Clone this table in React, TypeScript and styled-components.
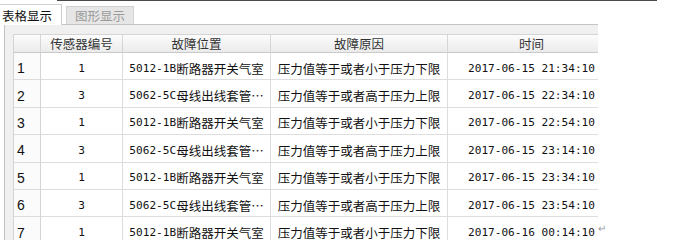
import React from 'react';
import styled, { createGlobalStyle } from 'styled-components';

const GlobalStyle = createGlobalStyle`
    body {
        margin: 0;
        background: #fff;
        font-family: "Noto Sans CJK SC", "Liberation Sans", sans-serif;
    }
`;

const Page = styled.div`
    width: 683px;
    height: 245px;
    overflow: hidden;
`;

const TopRule = styled.div`
    margin-left: 57px;
    width: 600px;
    height: 1px;
    background: #4a4a4a;
`;

const Body = styled.div`
    display: flex;
    align-items: flex-end;
`;

const Widget = styled.div`
    width: 598px;
    height: 239px;
    overflow: hidden;
`;

const TabBar = styled.div`
    display: flex;
    align-items: flex-end;
    height: 22px;
    margin-top: 1px;
    gap: 4px;
`;

const Tab = styled.div<{ $active?: boolean }>`
    height: ${p => (p.$active ? '21px' : '18px')};
    padding: 0 ${p => (p.$active ? '9px 0 2px' : '8px')};
    display: flex;
    align-items: center;
    font-size: 12.5px;
    color: ${p => (p.$active ? '#111' : '#9a9a9a')};
    background: ${p => (p.$active ? '#fff' : '#e6e6e6')};
    border: 1px solid ${p => (p.$active ? '#cfcfcf' : '#d2d2d2')};
    border-left: ${p => (p.$active ? 'none' : '1px solid #d2d2d2')};
    border-bottom: none;
    box-sizing: border-box;
    position: relative;
    top: ${p => (p.$active ? '1px' : '0')};
`;

const Pane = styled.div`
    margin-left: 4px;
    height: 216px;
    background: #f0f0f0;
    border-top: 1px solid #c4c4c4;
    border-left: 1px solid #c4c4c4;
    padding: 9px 0 0 8px;
    box-sizing: border-box;
`;

const Grid = styled.div`
    display: grid;
    grid-template-columns: 27px 82px 148px 177px 168px;
    grid-auto-rows: 27.4px;
    grid-template-rows: 18px;
    background: #fff;
    border-left: 1px solid #d4d4d4;
    border-top: 1px solid #d4d4d4;
`;

const HeadCell = styled.div`
    display: flex;
    align-items: center;
    justify-content: center;
    font-size: 12.5px;
    color: #333;
    background: linear-gradient(#fcfcfc, #ebebeb);
    border-right: 1px solid #d6d6d6;
    border-bottom: 1px solid #c9c9c9;
    box-sizing: border-box;
    white-space: nowrap;
`;

const RowHead = styled.div`
    display: flex;
    align-items: center;
    padding: 4px 0 0 3px;
    font-family: "Liberation Sans", sans-serif;
    font-size: 14px;
    color: #111;
    background: #fbfbfb;
    border-right: 1px solid #d4d4d4;
    border-bottom: 1px solid #dcdcdc;
    box-sizing: border-box;
`;

const Cell = styled.div<{ $mono?: boolean }>`
    display: flex;
    align-items: center;
    justify-content: center;
    padding-top: 4px;
    font-family: ${p => (p.$mono ? '"DejaVu Sans Mono", monospace' : '"Noto Sans CJK SC", sans-serif')};
    font-size: ${p => (p.$mono ? '11.1px' : '12.5px')};
    color: #111;
    border-right: 1px solid #dedede;
    border-bottom: 1px solid #dedede;
    box-sizing: border-box;
    white-space: nowrap;
    overflow: hidden;
`;

const Code = styled.span`
    font-family: "DejaVu Sans Mono", monospace;
    font-size: 11.1px;
`;

const Mark = styled.span`
    font-size: 10px;
    color: #999;
    margin: 0 0 5px 0;
`;

const HEADERS = ['传感器编号', '故障位置', '故障原因', '时间'];

const LOC_A = ['5012-1B', '断路器开关气室'];
const LOC_B = ['5062-5C', '母线出线套管…'];
const LOW = '压力值等于或者小于压力下限';
const HIGH = '压力值等于或者高于压力上限';

const ROWS = [
    { id: '1', loc: LOC_A, reason: LOW, time: '2017-06-15 21:34:10' },
    { id: '3', loc: LOC_B, reason: HIGH, time: '2017-06-15 22:34:10' },
    { id: '1', loc: LOC_A, reason: LOW, time: '2017-06-15 22:54:10' },
    { id: '3', loc: LOC_B, reason: HIGH, time: '2017-06-15 23:14:10' },
    { id: '1', loc: LOC_A, reason: LOW, time: '2017-06-15 23:34:10' },
    { id: '3', loc: LOC_B, reason: HIGH, time: '2017-06-15 23:54:10' },
    { id: '1', loc: LOC_A, reason: LOW, time: '2017-06-16 00:14:10' },
];

const App = () => {
    return (
        <>
            <GlobalStyle />
            <Page>
                <TopRule />
                <Body>
                    <Widget>
                        <TabBar>
                            <Tab $active>表格显示</Tab>
                            <Tab>图形显示</Tab>
                        </TabBar>
                        <Pane>
                            <Grid>
                                <HeadCell />
                                {HEADERS.map((h) => (
                                    <HeadCell key={h}>{h}</HeadCell>
                                ))}
                                {ROWS.map((row, i) => (
                                    <React.Fragment key={i}>
                                        <RowHead>{i + 1}</RowHead>
                                        <Cell $mono>{row.id}</Cell>
                                        <Cell>
                                            <Code>{row.loc[0]}</Code>
                                            {row.loc[1]}
                                        </Cell>
                                        <Cell>{row.reason}</Cell>
                                        <Cell $mono>{row.time}</Cell>
                                    </React.Fragment>
                                ))}
                            </Grid>
                        </Pane>
                    </Widget>
                    <Mark>↵</Mark>
                </Body>
            </Page>
        </>
    );
};

export default App;
